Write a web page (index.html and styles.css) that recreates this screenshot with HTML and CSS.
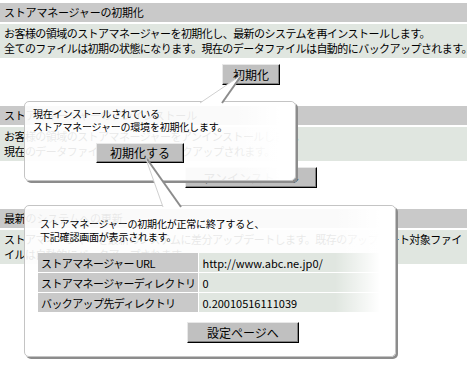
FILE: index.html
```html
<!DOCTYPE html>
<html lang="ja">
<head>
    <meta charset="UTF-8">
    <title>ストアマネージャーの初期化</title>
    <link rel="stylesheet" href="styles.css">
</head>
<body>
    <div class="page">
        <div class="section">
            <div class="section-title">ストアマネージャーの初期化</div>
            <div class="section-body">
                お客様の領域のストアマネージャーを初期化し、最新のシステムを再インストールします。<br>
                全てのファイルは初期の状態になります。現在のデータファイルは自動的にバックアップされます。
            </div>
            <div class="actions"><button class="btn">初期化</button></div>
        </div>
        <div class="section">
            <div class="section-title">ストアマネージャーのアンインストール</div>
            <div class="section-body">
                お客様の領域のストアマネージャーをアンインストールします。<br>
                現在のデータファイルは自動的にバックアップされます。
            </div>
            <div class="actions"><button class="btn btn-wide">アンインストール</button></div>
        </div>
        <div class="section">
            <div class="section-title">最新のシステムへの更新</div>
            <div class="section-body">
                ストアマネージャーを最新のシステムに差分アップデートします。既存のアップデート対象ファイ<br>
                イルは自動的にバックアップされます。
            </div>
        </div>
    </div>

    <!-- 吹き出し 1 -->
    <svg class="tail tail-1" width="60" height="40" viewBox="0 0 60 40">
        <polygon points="0,28 40,1 22,28" fill="#fff"/>
        <line x1="22" y1="28" x2="41" y2="1" stroke="#8c8c8c" stroke-width="2"/>
        <line x1="0" y1="28" x2="40" y2="1" stroke="#d0d0d0" stroke-width="1"/>
    </svg>
    <div class="callout callout-1">
        <p class="callout-text">現在インストールされている<br>ストアマネージャーの環境を初期化します。</p>
        <button class="btn btn-reset">初期化する</button>
    </div>

    <!-- 吹き出し 2 -->
    <svg class="tail tail-2" width="50" height="52" viewBox="0 0 50 52">
        <polygon points="20,50 3,2 38,50" fill="#fff"/>
        <line x1="38" y1="50" x2="4" y2="2" stroke="#8c8c8c" stroke-width="2"/>
        <line x1="20" y1="50" x2="3" y2="2" stroke="#d0d0d0" stroke-width="1"/>
    </svg>
    <div class="callout callout-2">
        <p class="callout-text">ストアマネージャーの初期化が正常に終了すると、<br>下記確認画面が表示されます。</p>
        <table class="info">
            <tr><th>ストアマネージャー URL</th><td>http://www.abc.ne.jp0/</td></tr>
            <tr><th>ストアマネージャーディレクトリ</th><td>0</td></tr>
            <tr><th>バックアップ先ディレクトリ</th><td>0.20010516111039</td></tr>
        </table>
        <button class="btn btn-settings">設定ページへ</button>
    </div>
</body>
</html>
```

FILE: styles.css
```css
body {
    margin: 0;
    padding-top: 3px;
    overflow: hidden;
    background: #fff;
    font-family: "Noto Sans CJK JP", "Noto Sans", sans-serif;
    color: #000;
}
.page {
    width: 502px;
}
.section {
    margin-bottom: 21px;
}
.section-title {
    background-color: #c9c9c9;
    height: 19px;
    line-height: 19px;
    padding-left: 4px;
    font-size: 11px;
    letter-spacing: -0.2px;
}
.section-body {
    background-color: #e0e6e0;
    margin-top: 2px;
    height: 34px;
    padding: 2px 4px 0;
    box-sizing: border-box;
    font-size: 11px;
    line-height: 15px;
    letter-spacing: -0.55px;
    white-space: nowrap;
}
.actions {
    display: flex;
    justify-content: center;
    margin-top: 6px;
}
.btn {
    font-family: "Noto Sans CJK JP", sans-serif;
    font-size: 12px;
    background-color: #c0c0c0;
    border: 1px solid;
    border-color: #e8e8e8 #000 #000 #e8e8e8;
    box-shadow: inset -1px -1px 0 #808080;
    height: 21px;
    padding: 0 10px;
    line-height: 18px;
    color: #000;
}
.btn-wide {
    width: 132px;
}
.callout {
    position: absolute;
    left: 24px;
    background: rgba(255, 255, 255, 0.91);
    border: 1px solid #c4c4c4;
    border-radius: 5px;
    box-shadow: 2px 2px 0 #8c8c8c;
    box-sizing: border-box;
}
.callout::after {
    content: '';
    position: absolute;
    top: 0;
    right: 0;
    bottom: 0;
    width: 60px;
    border-radius: 0 5px 5px 0;
    background: linear-gradient(to right, rgba(255, 255, 255, 0), #fff 75%);
}
.callout-1 {
    top: 101px;
    width: 272px;
    height: 80px;
    padding: 5px 0 0 8px;
}
.callout-2 {
    top: 205px;
    width: 372px;
    height: 152px;
    padding: 11px 0 0 15px;
}
.callout-text {
    margin: 0;
    font-size: 10px;
    line-height: 13px;
    letter-spacing: -0.2px;
}
.btn-reset {
    display: block;
    width: 88px;
    height: 20px;
    margin: 10px 0 0 63px;
}
.info {
    border-collapse: separate;
    border-spacing: 0 1px;
    margin: 9px 0 0 -2px;
    width: 342px;
    font-size: 11px;
    letter-spacing: -0.6px;
}
.info th,
.info td {
    height: 19px;
    padding: 0 3px;
    text-align: left;
    font-weight: normal;
    white-space: nowrap;
}
.info th {
    background-color: #c9c9c9;
    width: 148px;
    border-right: 1px solid #fff;
}
.info td {
    background-color: #e0e6e0;
    letter-spacing: 0;
}
.btn-settings {
    display: block;
    width: 112px;
    margin: 9px 0 0 147px;
}
.tail {
    position: absolute;
    z-index: 1;
}
.tail-1 {
    left: 200px;
    top: 75px;
}
.tail-2 {
    left: 143px;
    top: 157px;
}
```
